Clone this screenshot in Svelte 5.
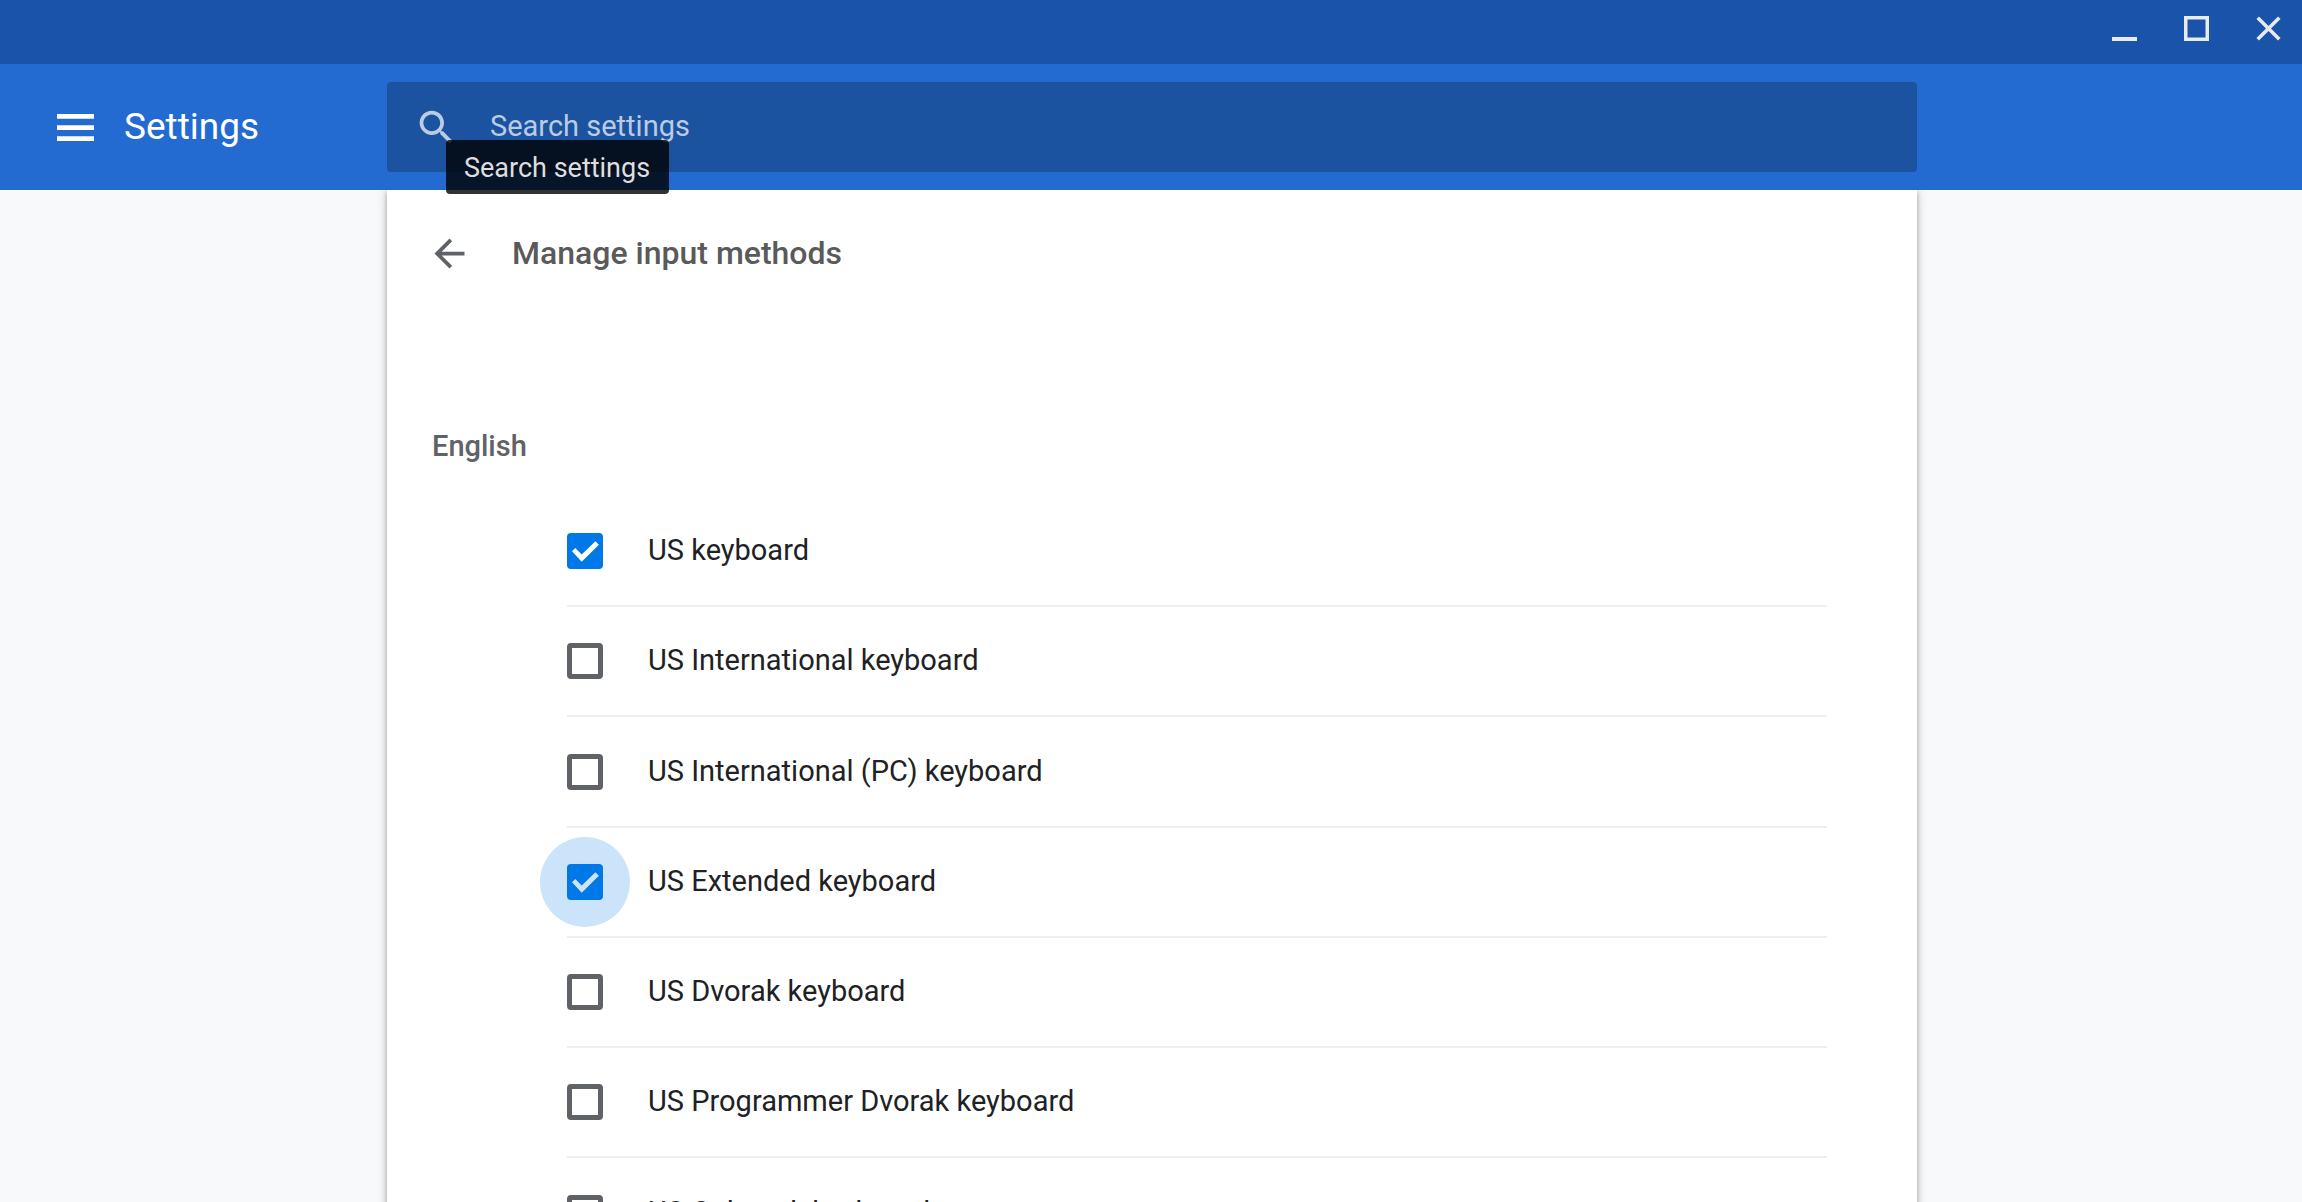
<script>
  let methods = $state([
    { id: 'us', name: 'US keyboard', enabled: true, active: false },
    { id: 'intl', name: 'US International keyboard', enabled: false, active: false },
    { id: 'intl-pc', name: 'US International (PC) keyboard', enabled: false, active: false },
    { id: 'extended', name: 'US Extended keyboard', enabled: true, active: true },
    { id: 'dvorak', name: 'US Dvorak keyboard', enabled: false, active: false },
    { id: 'dvp', name: 'US Programmer Dvorak keyboard', enabled: false, active: false },
    { id: 'colemak', name: 'US Colemak keyboard', enabled: false, active: false }
  ]);
  let query = $state('');
</script>

<div class="window">
  <div class="titlebar">
    <button class="window-button" aria-label="Minimize">
      <svg viewBox="0 0 25 25"><path d="M0 21h25v4H0z" /></svg>
    </button>
    <button class="window-button" aria-label="Maximize">
      <svg viewBox="0 0 25 25"><path fill-rule="evenodd" d="M0 0h25v25H0zM3.5 3.5v18h18v-18z" /></svg>
    </button>
    <button class="window-button" aria-label="Close">
      <svg viewBox="0 0 25 25"><path class="cross" d="M1.7 1.7l21.6 21.6M23.3 1.7L1.7 23.3" /></svg>
    </button>
  </div>

  <header class="toolbar columns">
    <div class="brand">
      <button class="icon-button" aria-label="Main menu">
        <svg class="menu-icon" viewBox="0 0 37 27"><path d="M0 0h37v4.7H0zM0 11.2h37v4.7H0zM0 22.3h37V27H0z" /></svg>
      </button>
      <h1>Settings</h1>
    </div>
    <div class="search">
      <svg class="search-icon" viewBox="0 0 24 24" aria-hidden="true">
        <path d="M15.5 14h-.79l-.28-.27C15.41 12.59 16 11.11 16 9.5 16 5.91 13.09 3 9.5 3S3 5.91 3 9.5 5.91 16 9.5 16c1.61 0 3.09-.59 4.23-1.57l.27.28v.79l5 4.99L20.49 19l-4.99-5zm-6 0C7.01 14 5 11.99 5 9.5S7.01 5 9.5 5 14 7.01 14 9.5 11.99 14 9.5 14z" />
      </svg>
      <input type="text" aria-label="Search settings" placeholder="Search settings" bind:value={query} />
      <div class="tooltip" role="tooltip">Search settings</div>
    </div>
  </header>

  <div class="content columns">
    <main class="card">
      <div class="subpage-header">
        <button class="icon-button" aria-label="Back">
          <svg class="back-icon" viewBox="0 0 24 24"><path d="M20 11H7.83l5.59-5.59L12 4l-8 8 8 8 1.41-1.41L7.83 13H20v-2z" /></svg>
        </button>
        <h2>Manage input methods</h2>
      </div>
      <h3>English</h3>
      <ul>
        {#each methods as method (method.id)}
          <li>
            <label>
              <span class="checkbox" class:active={method.active}>
                <input type="checkbox" bind:checked={method.enabled} />
                {#if method.enabled}
                  <svg viewBox="0 0 36 36" aria-hidden="true"><path d="M5 18.3L8.3 15l6.4 6.6L28.4 8.2l3.5 3.6-17.2 16.9z" /></svg>
                {/if}
              </span>
              <span class="name">{method.name}</span>
            </label>
          </li>
        {/each}
      </ul>
    </main>
  </div>
</div>

<style>
  :global(body) {
    margin: 0;
  }

  .window {
    display: flex;
    flex-direction: column;
    height: 100vh;
    overflow: hidden;
    background: #f8f9fb;
    color: #202124;
    font: 400 29px/44px Roboto, "Liberation Sans", sans-serif;
  }

  h1, h2, h3, ul {
    margin: 0;
    padding: 0;
  }

  button {
    display: flex;
    align-items: center;
    justify-content: center;
    padding: 0;
    border: 0;
    background: none;
    color: inherit;
  }

  svg {
    display: block;
    fill: currentColor;
  }

  .titlebar {
    display: flex;
    flex: none;
    gap: 47px;
    justify-content: flex-end;
    height: 57px;
    padding: 0 21px 7px 0;
    background: #1a54aa;
    color: #e8eaed;
  }

  .window-button svg {
    width: 25px;
    height: 25px;
  }

  .cross {
    fill: none;
    stroke: currentColor;
    stroke-width: 3.6;
  }

  .columns {
    display: grid;
    grid-template-columns: 1fr minmax(0, 1530px) 1fr;
    padding-left: 2px;
  }

  .toolbar {
    position: relative;
    z-index: 1;
    flex: none;
    align-items: center;
    height: 126px;
    background: #236bd1;
    color: #fff;
  }

  .brand {
    display: flex;
    align-items: center;
    gap: 30px;
    padding-left: 55px;
  }

  h1 {
    font-size: 37px;
    font-weight: 400;
  }

  .menu-icon {
    width: 37px;
    height: 27px;
  }

  .search {
    position: relative;
    display: flex;
    align-items: center;
    gap: 31px;
    height: 90px;
    padding: 0 27px;
    border-radius: 4px;
    background: #1b53a1;
    color: #bacbe3;
  }

  .search-icon {
    flex: none;
    width: 45px;
    height: 45px;
  }

  .search input {
    flex: 1;
    min-width: 0;
    padding: 0 0 2px;
    border: 0;
    outline: 0;
    background: none;
    color: inherit;
    font: inherit;
  }

  .search input::placeholder {
    color: inherit;
    opacity: 1;
  }

  .tooltip {
    position: absolute;
    top: 58px;
    left: 59px;
    padding: 6px 19px 4px 18px;
    border-radius: 4px;
    background: rgba(0, 0, 0, 0.8);
    color: #dedede;
    font-size: 27px;
    white-space: nowrap;
  }

  .content {
    flex: 1;
    min-height: 0;
  }

  .card {
    grid-column: 2;
    padding: 0 90px 0 45px;
    background: #fff;
    box-shadow: 0 2px 5px rgba(0, 0, 0, 0.3), 0 2px 12px rgba(0, 0, 0, 0.15);
  }

  .subpage-header {
    display: flex;
    align-items: center;
    gap: 40px;
    height: 126px;
    margin-left: -5px;
    color: #5f6368;
  }

  .back-icon {
    width: 45px;
    height: 45px;
  }

  h2 {
    color: #5a5a5a;
    font-size: 32px;
    font-weight: 500;
  }

  h3 {
    padding: 108px 0 29px;
    color: #5f6368;
    font-size: 29px;
    font-weight: 500;
  }

  ul {
    padding-left: 135px;
    list-style: none;
  }

  li {
    border-bottom: 2px solid #efefef;
  }

  label {
    display: flex;
    align-items: center;
    gap: 45px;
    height: 108px;
  }

  .name {
    padding-bottom: 2px;
  }

  li:nth-child(4n + 3) label {
    height: 109px;
  }

  .checkbox {
    position: relative;
    display: grid;
    width: 36px;
    height: 36px;
    color: #fff;
  }

  .checkbox input {
    grid-area: 1 / 1;
    appearance: none;
    width: 36px;
    height: 36px;
    margin: 0;
    border: 5px solid #5f6368;
    border-radius: 4px;
  }

  .checkbox input:checked {
    border-color: #0078e7;
    background: #0078e7;
  }

  .checkbox svg {
    z-index: 1;
    grid-area: 1 / 1;
    pointer-events: none;
  }

  .checkbox.active {
    color: #cce4fa;
  }

  .checkbox.active::before {
    content: "";
    position: absolute;
    inset: -27px;
    border-radius: 50%;
    background: #cce4fa;
  }

  .checkbox.active input {
    z-index: 1;
  }
</style>
